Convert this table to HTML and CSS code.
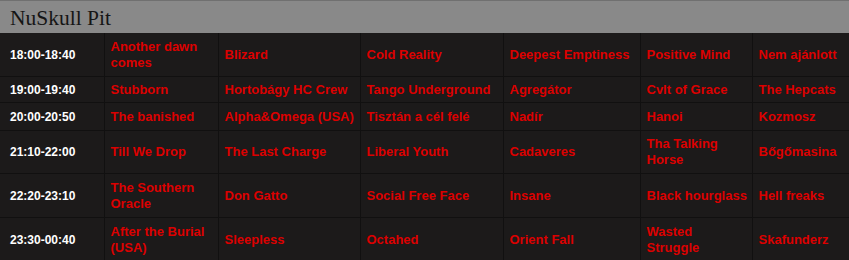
FILE: index.html
```html
<!DOCTYPE html>
<html>
<head>
<meta charset="utf-8">
<link rel="stylesheet" href="styles.css">
</head>
<body>
<div class="stage">
  <div class="stage-title">NuSkull Pit</div>
  <table class="schedule">
    <colgroup>
      <col class="c-time"><col class="c1"><col class="c2"><col class="c3"><col class="c4"><col class="c5"><col class="c6">
    </colgroup>
    <tr class="r1">
      <td class="time">18:00-18:40</td>
      <td>Another dawn comes</td><td>Blizard</td><td>Cold Reality</td><td>Deepest Emptiness</td><td>Positive Mind</td><td>Nem ajánlott</td>
    </tr>
    <tr class="r2">
      <td class="time">19:00-19:40</td>
      <td>Stubborn</td><td>Hortobágy HC Crew</td><td>Tango Underground</td><td>Agregátor</td><td>Cvlt of Grace</td><td>The Hepcats</td>
    </tr>
    <tr class="r3">
      <td class="time">20:00-20:50</td>
      <td>The banished</td><td>Alpha&amp;Omega (USA)</td><td>Tisztán a cél felé</td><td>Nadír</td><td>Hanoi</td><td>Kozmosz</td>
    </tr>
    <tr class="r4">
      <td class="time">21:10-22:00</td>
      <td>Till We Drop</td><td>The Last Charge</td><td>Liberal Youth</td><td>Cadaveres</td><td>Tha Talking Horse</td><td>Bőgőmasina</td>
    </tr>
    <tr class="r5">
      <td class="time">22:20-23:10</td>
      <td>The Southern Oracle</td><td>Don Gatto</td><td>Social Free Face</td><td>Insane</td><td>Black hourglass</td><td>Hell freaks</td>
    </tr>
    <tr class="r6">
      <td class="time">23:30-00:40</td>
      <td>After the Burial (USA)</td><td>Sleepless</td><td>Octahed</td><td>Orient Fall</td><td>Wasted Struggle</td><td>Skafunderz</td>
    </tr>
  </table>
</div>
</body>
</html>
```

FILE: styles.css
```css
html, body {
  margin: 0;
  padding: 0;
  background: #1b1a1a;
}
.stage {
  width: 849px;
}
.stage-title {
  background: #898989;
  border-top: 1px solid #707070;
  height: 33px;
  box-sizing: border-box;
  padding: 5px 0 0 10px;
  font-family: "Liberation Serif", "Times New Roman", serif;
  font-size: 21.5px;
  line-height: 24px;
  color: #151515;
}
.schedule {
  width: 849px;
  border-collapse: collapse;
  table-layout: fixed;
  background: #1c1a1a;
}
.c-time { width: 104px; }
.c1 { width: 114px; }
.c2 { width: 142px; }
.c3 { width: 143px; }
.c4 { width: 137px; }
.c5 { width: 112px; }
.c6 { width: 97px; }
.schedule td {
  border: 1px solid #111010;
  padding: 5px 4px 5px 6px;
  font-family: "Liberation Sans", Arial, sans-serif;
  font-weight: bold;
  font-size: 13px;
  line-height: 16px;
  color: #dc0000;
  vertical-align: middle;
}
.schedule tr:first-child td {
  border-top: none;
}
.schedule td:first-child {
  border-left: none;
}
.schedule td:last-child {
  border-right: none;
}
.schedule td.time {
  padding-left: 10px;
  color: #ffffff;
  font-size: 12px;
}
.schedule tr.r1 td { padding-top: 6px; padding-bottom: 5px; }
.schedule tr.r2 td { padding-top: 5px; padding-bottom: 4px; }
.schedule tr.r3 td { padding-top: 6px; padding-bottom: 5px; }
.schedule tr.r4 td { padding-top: 5px; padding-bottom: 5px; }
.schedule tr.r5 td { padding-top: 6px; padding-bottom: 5px; }
.schedule tr.r6 td { padding-top: 6px; padding-bottom: 5px; }
```
